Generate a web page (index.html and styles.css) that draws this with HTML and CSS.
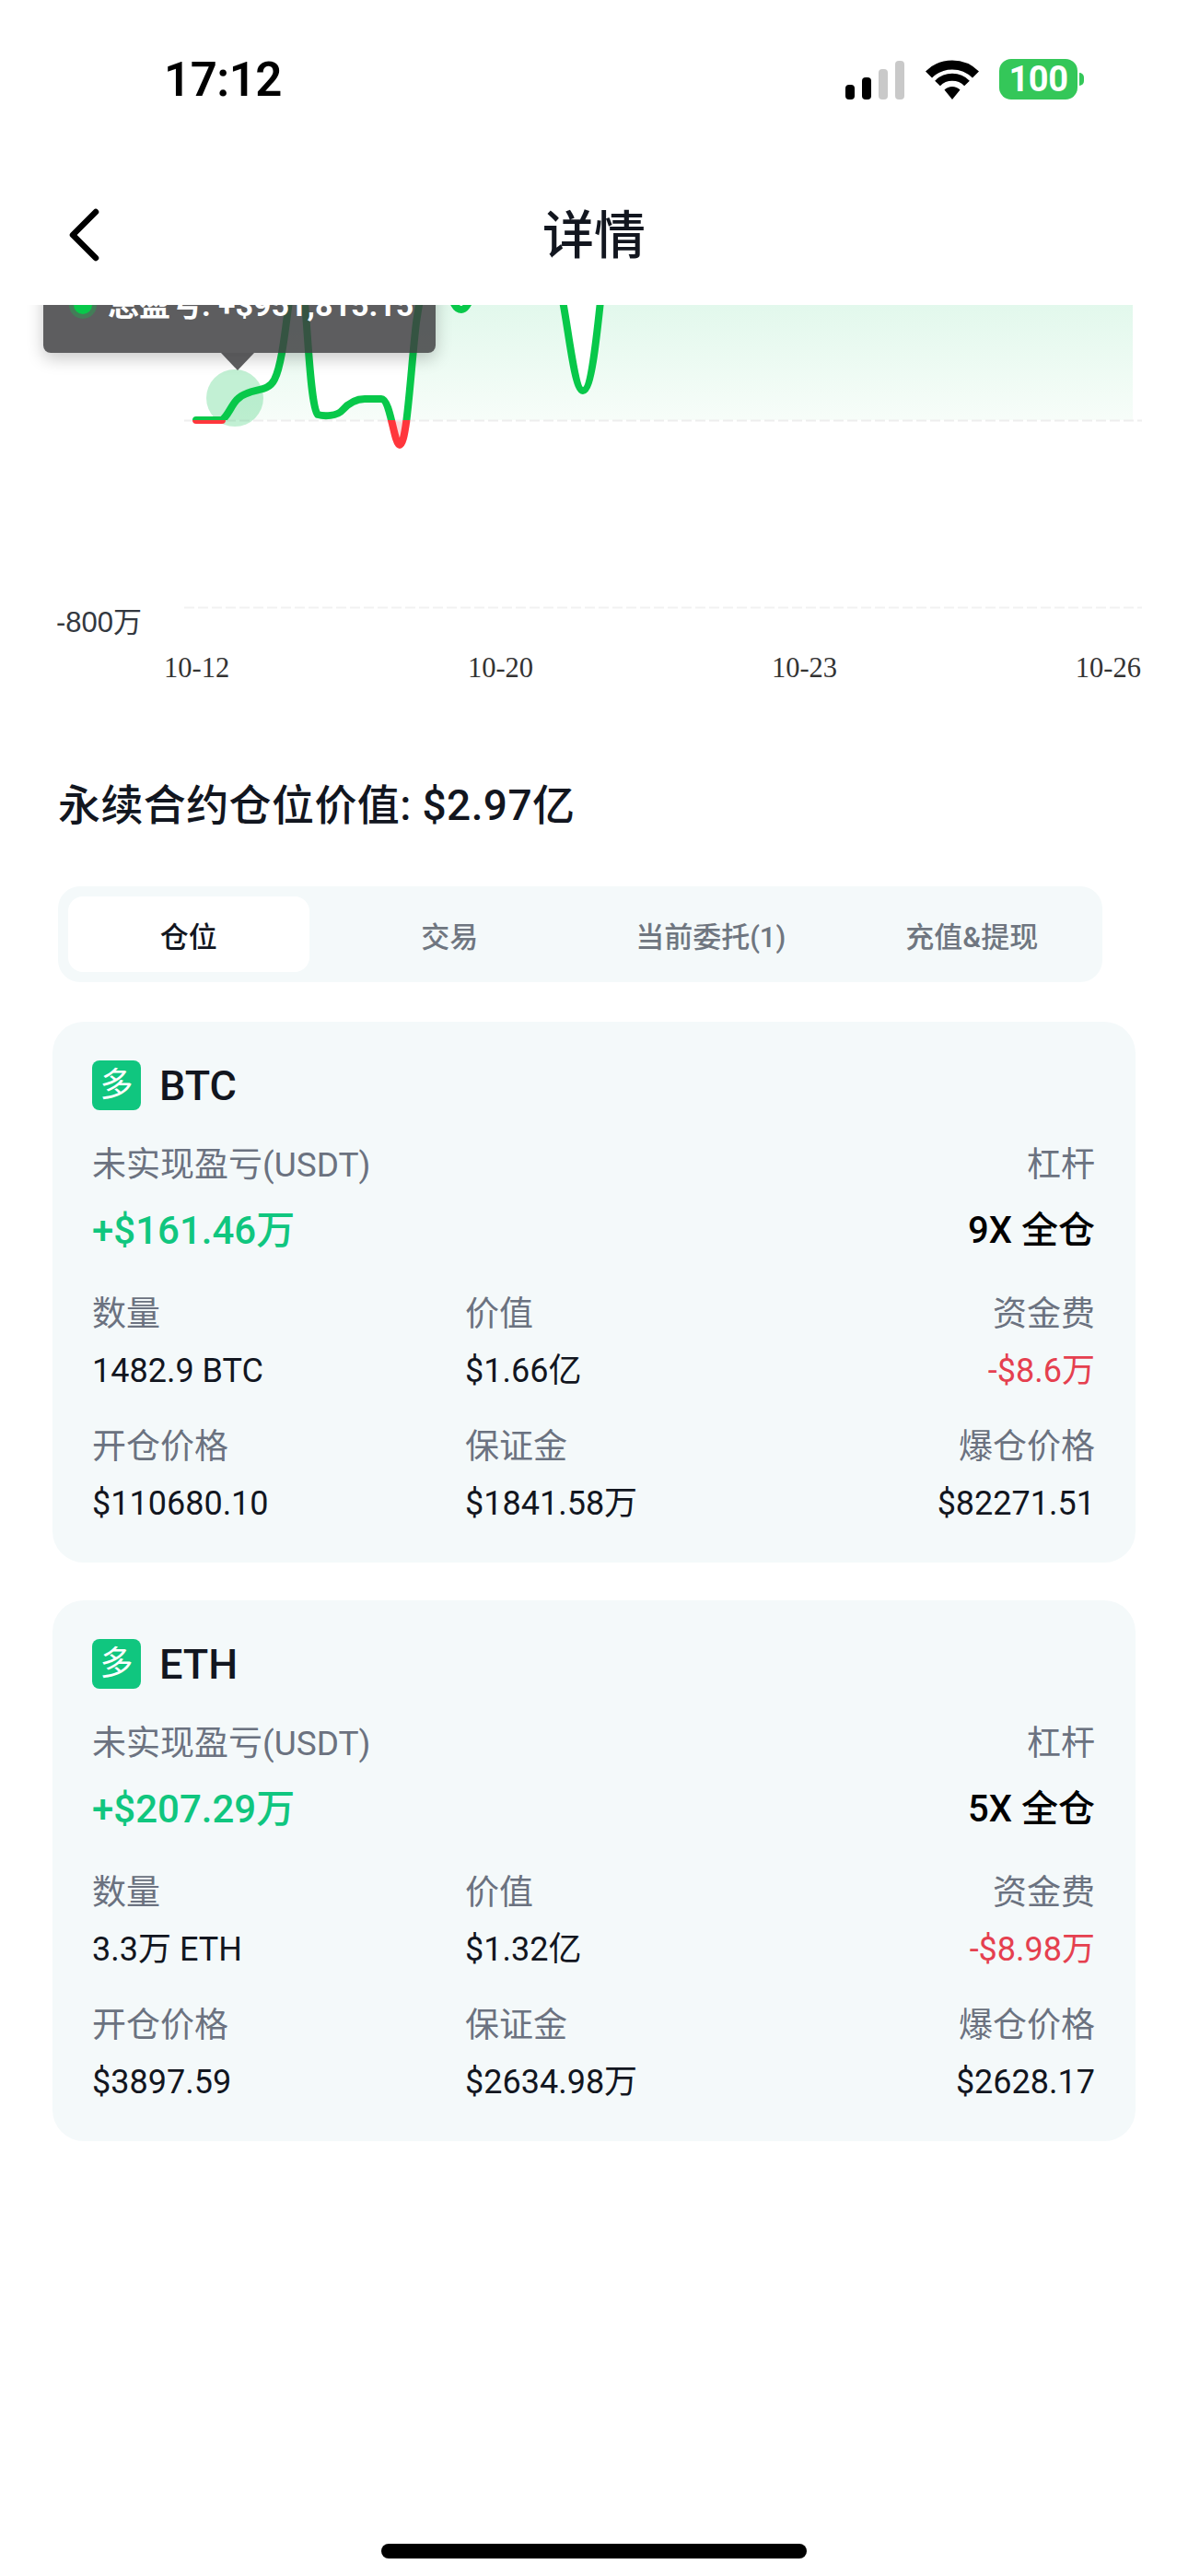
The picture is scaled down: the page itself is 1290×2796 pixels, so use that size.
FILE: index.html
```html
<!DOCTYPE html>
<html lang="zh">
<head>
<meta charset="utf-8">
<title>详情</title>
<link rel="stylesheet" href="styles.css">
</head>
<body>
<div class="page">
  <div class="status">
    <span class="time">17:12</span>
    <div class="status-icons">
      <div class="signal"><i class="s1"></i><i class="s2"></i><i class="s3 off"></i><i class="s4 off"></i></div>
      <svg class="wifi" width="58" height="44" viewBox="0 0 58 44"><path d="M3.500 17 A36 36 0 0 1 54.500 17" fill="none" stroke="#000" stroke-width="10"/><path d="M13 26.500 A22.500 22.500 0 0 1 45 26.500" fill="none" stroke="#000" stroke-width="8"/><path d="M29 44 L20.500 33.500 A12 12 0 0 1 37.500 33.500 Z" fill="#000"/></svg>
      <div class="battery"><span class="batt-body">100</span><span class="batt-nub"></span></div>
    </div>
  </div>
  <header class="nav">
    <svg class="back" width="34" height="58" viewBox="0 0 34 58"><path d="M29 4 L4 29 L29 54" fill="none" stroke="#000" stroke-width="6.500" stroke-linecap="round" stroke-linejoin="round"/></svg>
    <h1 class="nav-title">详情</h1>
  </header>

  <section class="chart">
    <svg class="chart-svg" width="1290" height="369" viewBox="0 331 1290 369">
      <defs>
        <linearGradient id="gfill" x1="0" y1="331" x2="0" y2="456" gradientUnits="userSpaceOnUse">
          <stop offset="0" stop-color="#e2f8ec"/><stop offset="1" stop-color="#f7fdf9"/>
        </linearGradient>
        <clipPath id="above"><rect x="0" y="300" width="1290" height="156"/></clipPath>
        <clipPath id="below"><rect x="0" y="456" width="1290" height="100"/></clipPath>
      </defs>
      <path clip-path="url(#above)" fill="url(#gfill)" d="M210,456 L241,456 C250,450 252,432 268,427 C280,422 292,424 298,412 C308,392 311,340 318,300 L328,300 C334,340 336,440 345,450 C352,452 366,452 372,445 C380,436 388,433 396,433 L414,433 C424,433 428,483 434,483 C442,483 446,400 452,350 C455,330 458,310 462,295 L486,310 C492,330 495,336 501,336 C507,336 512,325 516,305 L606,305 C615,330 622,424 633,424 C644,424 650,340 655,300 L1230,300 L1230,456 Z"/>
      <path clip-path="url(#below)" fill="#fbd9da" d="M420,456 C426,470 430,483 434,483 C440,483 443,470 446,456 Z"/>
      <line x1="200" y1="456.500" x2="1240" y2="456.500" stroke="#eeeeee" stroke-width="2" stroke-dasharray="11 4"/>
      <line x1="200" y1="659.500" x2="1240" y2="659.500" stroke="#f1f1f1" stroke-width="2" stroke-dasharray="11 4"/>
      <ellipse cx="255" cy="432" rx="31" ry="31" fill="#00c24a" fill-opacity="0.24"/>
      <path clip-path="url(#above)" fill="none" stroke="#08c84a" stroke-width="8" stroke-linecap="round" stroke-linejoin="round" d="M213,456 L241,456 C250,450 252,432 268,427 C280,422 292,424 298,412 C308,392 311,340 318,300 L328,300 C334,340 336,440 345,450 C352,452 366,452 372,445 C380,436 388,433 396,433 L414,433 C424,433 428,483 434,483 C442,483 446,400 452,350 C455,330 458,310 462,295 L486,310 C492,330 495,336 501,336 C507,336 512,325 516,305 L606,305 C615,330 622,424 633,424 C644,424 650,340 655,300"/>
      <path clip-path="url(#below)" fill="none" stroke="#ff363c" stroke-width="8" stroke-linecap="round" stroke-linejoin="round" d="M213,456 L241,456 M414,433 C424,433 428,483 434,483 C442,483 446,400 452,350"/>
    </svg>
    <div class="tooltip">
      <span class="tip-dot"></span>
      <span class="tip-text">总盈亏: +$951,815.15</span>
      <span class="tip-arrow"></span>
    </div>
    <span class="y-label">-800万</span>
  </section>
  <div class="x-labels"><span>10-12</span><span>10-20</span><span>10-23</span><span>10-26</span></div>

  <h2 class="value-title">永续合约仓位价值: $2.97亿</h2>

  <nav class="tabs">
    <div class="tab active"><span>仓位</span></div>
    <div class="tab"><span>交易</span></div>
    <div class="tab"><span>当前委托(1)</span></div>
    <div class="tab"><span>充值&amp;提现</span></div>
  </nav>

  <article class="card">
    <div class="card-head"><span class="badge">多</span><span class="coin">BTC</span></div>
    <div class="top-row">
      <div><div class="label">未实现盈亏(USDT)</div><div class="pnl">+$161.46万</div></div>
      <div class="right"><div class="label">杠杆</div><div class="lev">9X 全仓</div></div>
    </div>
    <div class="grid">
      <div><div class="label">数量</div><div class="val">1482.9 BTC</div></div>
      <div><div class="label">价值</div><div class="val">$1.66亿</div></div>
      <div class="right"><div class="label">资金费</div><div class="val neg">-$8.6万</div></div>
      <div><div class="label">开仓价格</div><div class="val">$110680.10</div></div>
      <div><div class="label">保证金</div><div class="val">$1841.58万</div></div>
      <div class="right"><div class="label">爆仓价格</div><div class="val">$82271.51</div></div>
    </div>
  </article>

  <article class="card">
    <div class="card-head"><span class="badge">多</span><span class="coin">ETH</span></div>
    <div class="top-row">
      <div><div class="label">未实现盈亏(USDT)</div><div class="pnl">+$207.29万</div></div>
      <div class="right"><div class="label">杠杆</div><div class="lev">5X 全仓</div></div>
    </div>
    <div class="grid">
      <div><div class="label">数量</div><div class="val">3.3万 ETH</div></div>
      <div><div class="label">价值</div><div class="val">$1.32亿</div></div>
      <div class="right"><div class="label">资金费</div><div class="val neg">-$8.98万</div></div>
      <div><div class="label">开仓价格</div><div class="val">$3897.59</div></div>
      <div><div class="label">保证金</div><div class="val">$2634.98万</div></div>
      <div class="right"><div class="label">爆仓价格</div><div class="val">$2628.17</div></div>
    </div>
  </article>

  <div class="home-indicator"></div>
</div>
</body>
</html>
```
FILE: styles.css
```css
* { box-sizing: border-box; }
html, body { margin: 0; padding: 0; background: #fff; }
body { font-family: Roboto, "Noto Sans CJK SC", sans-serif; color: #12161f; }
.page { position: relative; width: 1290px; height: 2796px; overflow: hidden; background: #fff; }

.status { height: 190px; padding: 54px 113px 0 178px; display: flex; justify-content: space-between; align-items: flex-start; }
.time { font-size: 51px; line-height: 66px; font-weight: 600; color: #000; letter-spacing: -0.5px; }
.status-icons { display: flex; align-items: flex-start; padding-top: 11px; }
.signal { display: flex; align-items: flex-end; gap: 8px; height: 42px; margin-top: 1px; }
.signal i { display: block; width: 10px; border-radius: 4px; background: #000; }
.signal .s1 { height: 16px; }
.signal .s2 { height: 24px; }
.signal .s3 { height: 33px; }
.signal .s4 { height: 42px; }
.signal .off { background: #c9c9c9; }
.wifi { margin-left: 23px; margin-top: -1px; }
.battery { display: flex; align-items: center; margin-left: 22px; margin-top: -1px; }
.batt-body { width: 85px; height: 44px; border-radius: 13px; background: #34c759; color: #fff; font-size: 38px; line-height: 44px; font-weight: 700; letter-spacing: -0.5px; text-align: center; }
.batt-nub { width: 5px; height: 14px; margin-left: 2px; border-radius: 0 5px 5px 0; background: #34c759; }

.nav { position: relative; height: 141px; display: flex; align-items: center; justify-content: center; padding-bottom: 9px; }
.nav-title { margin: 0; font-size: 56px; line-height: 70px; font-weight: 500; color: #12161f; }
.back { position: absolute; left: 75px; top: 36px; }

.chart { position: relative; height: 377px; overflow: hidden; }
.chart-svg { display: block; }
.tooltip { position: absolute; left: 47px; top: -38px; width: 426px; height: 90px; padding: 10px 0 0 70px; background: rgba(62, 62, 64, 0.84); border-radius: 8px; box-shadow: 0 6px 18px rgba(0, 0, 0, 0.22); color: #fff; font-size: 34px; line-height: 56px; font-weight: 700; white-space: nowrap; }
.tip-dot { position: absolute; left: 33px; top: 28px; width: 20px; height: 20px; border-radius: 50%; background: #08c84a; box-shadow: 0 0 0 5px rgba(8, 200, 74, 0.3); }
.tip-arrow { position: absolute; left: 193px; top: 90px; width: 0; height: 0; border-left: 18px solid transparent; border-right: 18px solid transparent; border-top: 19px solid rgba(62, 62, 64, 0.84); }
.y-label { position: absolute; left: 61px; top: 326px; font-family: "Liberation Sans", "Noto Sans CJK SC", sans-serif; font-size: 31px; line-height: 38px; color: #333840; }

.x-labels { height: 34px; padding: 0 51px 0 178px; display: flex; justify-content: space-between; font-family: "Liberation Serif", serif; font-size: 30.500px; line-height: 34px; color: #333; }

.value-title { margin: 0; padding: 102px 0 0 63px; height: 162px; font-size: 46px; line-height: 60px; font-weight: 500; letter-spacing: 0.4px; color: #12161f; }

.tabs { margin: 58px 0 0 63px; width: 1134px; height: 104px; border-radius: 24px; background: #f4f9fa; display: grid; grid-template-columns: repeat(4, 1fr); font-size: 31px; color: #6f7680; font-weight: 500; }
.tab { padding: 11px; }
.tab span { display: flex; align-items: center; justify-content: center; height: 82px; border-radius: 16px; }
.tab.active span { background: #fff; color: #12161f; }

.card { margin: 43px 0 0 57px; width: 1176px; height: 587px; padding: 42px 44px 0 43px; border-radius: 34px; background: #f4f9fa; }
.card + .card { margin-top: 41px; }
.card-head { display: flex; align-items: center; gap: 20px; height: 54px; }
.badge { width: 53px; height: 54px; border-radius: 8px; background: #10c67f; color: #fff; display: flex; align-items: center; justify-content: center; font-size: 36px; line-height: 1; }
.coin { padding-top: 2px; font-size: 45px; line-height: 54px; font-weight: 500; }
.top-row { display: flex; justify-content: space-between; margin-top: 33px; }
.label { padding-top: 2px; font-size: 37px; line-height: 50px; color: #6b7280; white-space: nowrap; }
.right { text-align: right; }
.pnl { margin-top: 18px; font-size: 42px; line-height: 56px; font-weight: 500; color: #10c67f; white-space: nowrap; }
.lev { margin-top: 18px; font-size: 40px; line-height: 56px; font-weight: 500; color: #000; white-space: nowrap; }
.grid { display: grid; grid-template-columns: 405px 1fr auto; row-gap: 34px; margin-top: 36px; }
.val { margin-top: 14px; font-size: 36px; line-height: 44px; color: #12161f; white-space: nowrap; }
.val.neg { color: #e5404f; }

.home-indicator { position: absolute; left: 414px; top: 2761px; width: 462px; height: 16px; border-radius: 8px; background: #000; }
```
